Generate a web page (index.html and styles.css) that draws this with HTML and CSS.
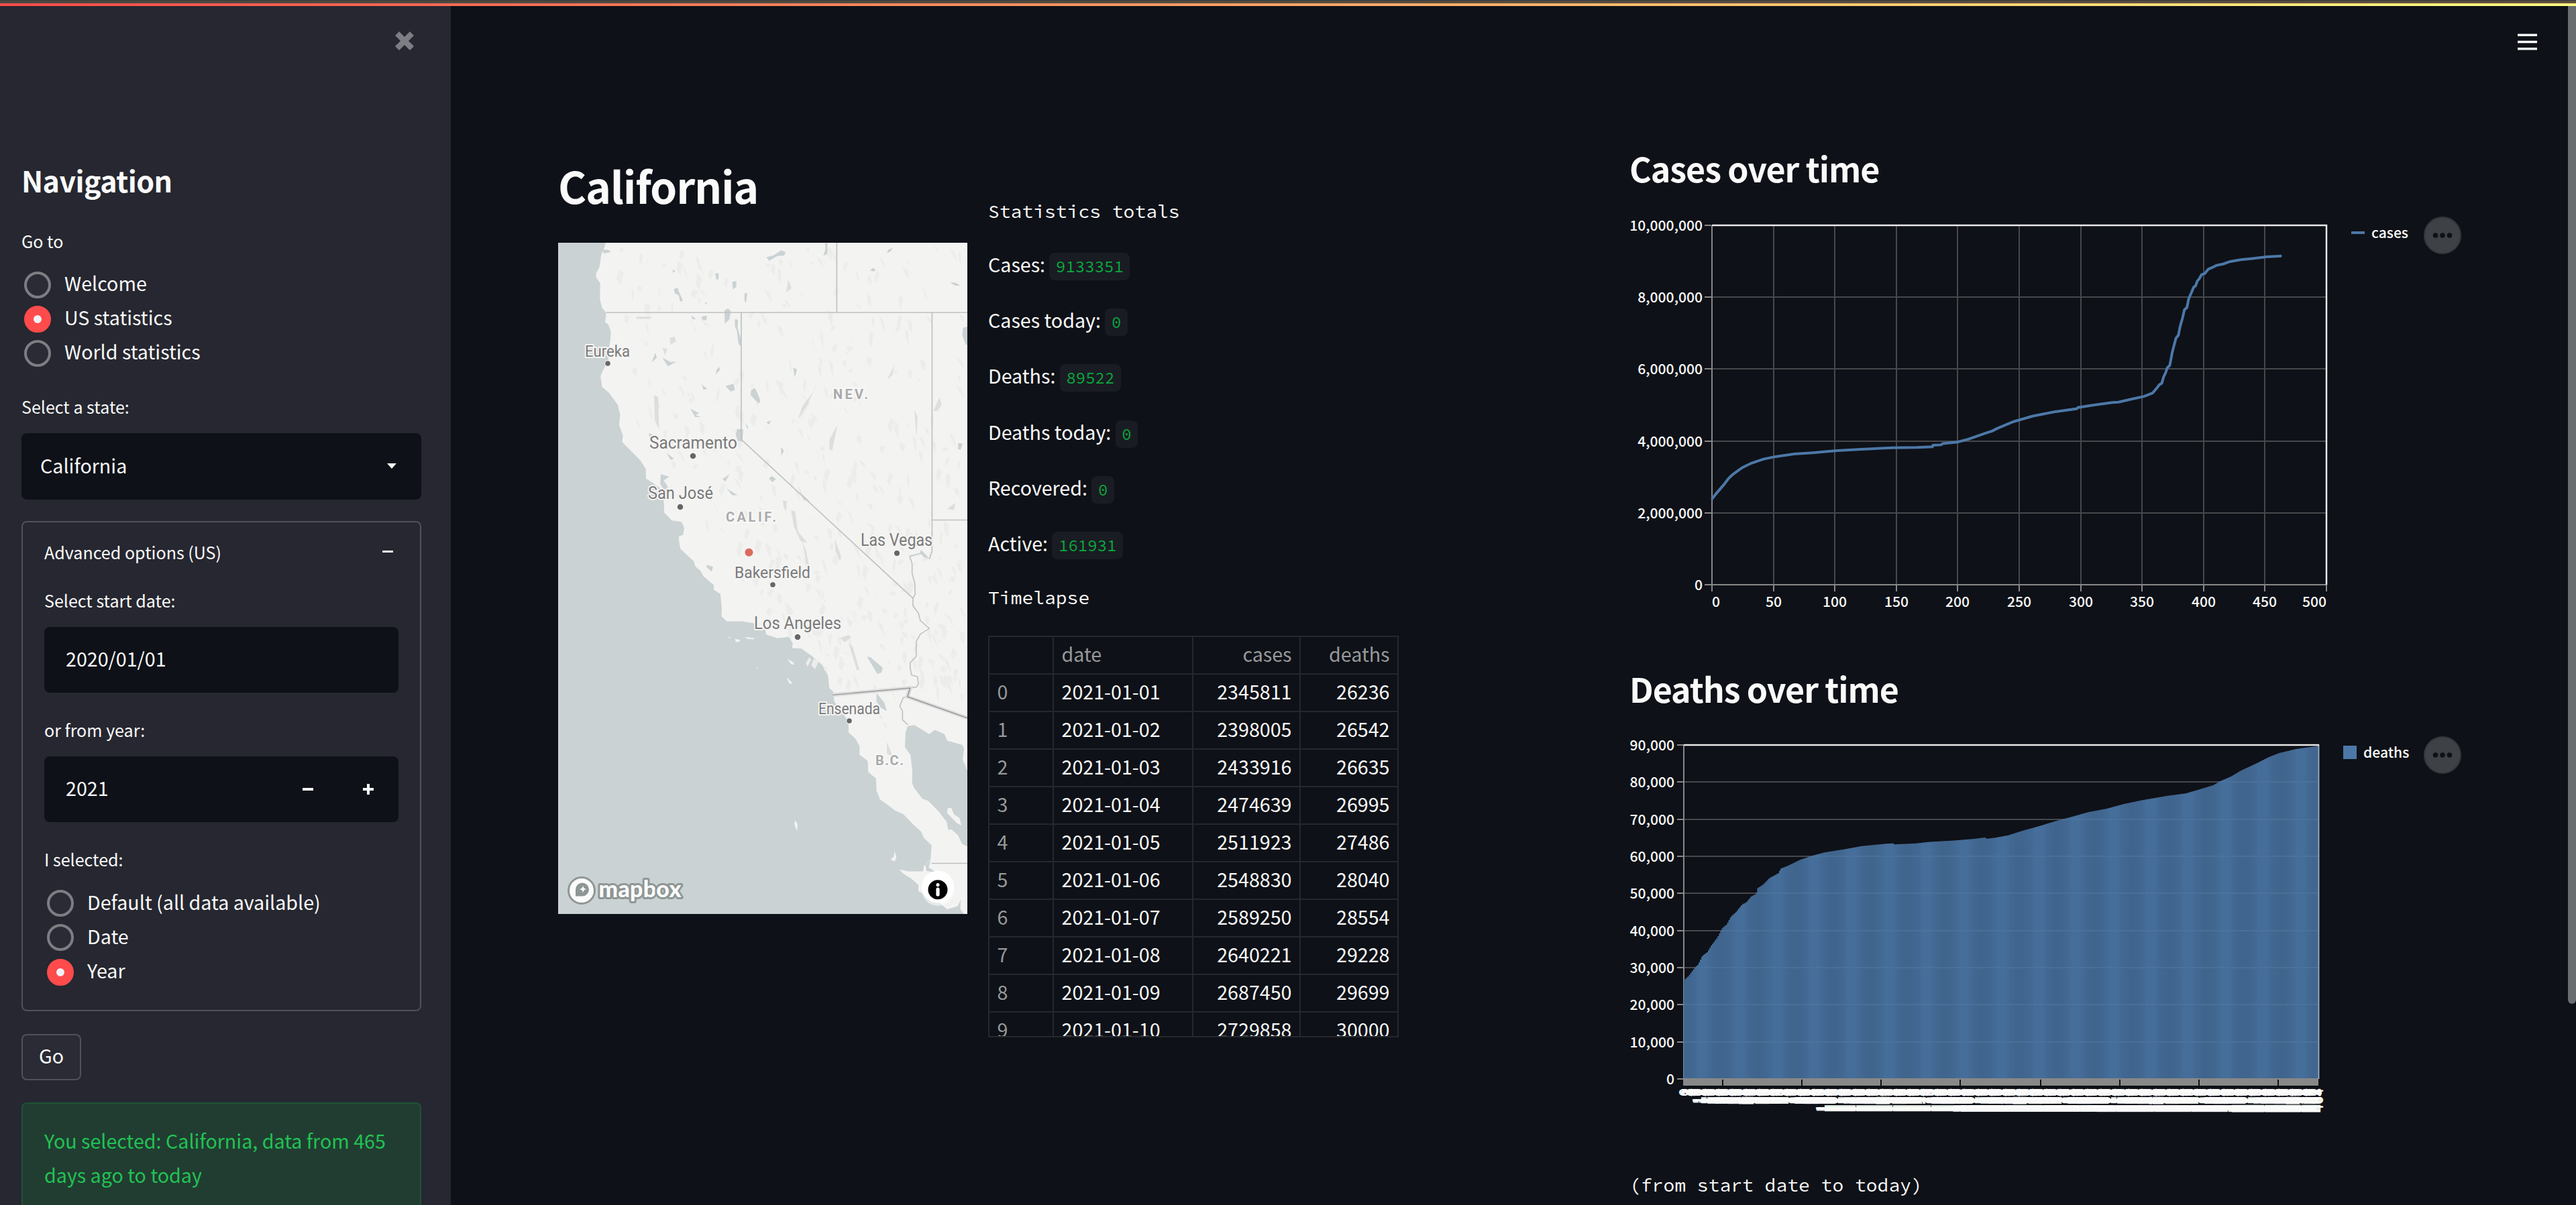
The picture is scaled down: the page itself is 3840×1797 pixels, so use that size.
FILE: index.html
```html
<!DOCTYPE html>
<html lang="en">
<head>
<meta charset="utf-8">
<title>California</title>
<link rel="stylesheet" href="styles.css">
</head>
<body>
<div class="decoration"></div>
<div class="app">
  <aside class="sidebar">
    <svg class="close" viewBox="0 0 28 28"><path d="M6 0 14 8 22 0 28 6 20 14 28 22 22 28 14 20 6 28 0 22 8 14 0 6Z"/></svg>
    <h2 class="nav-title">Navigation</h2>
    <div class="label">Go to</div>
    <div class="radios">
      <div class="radio"><i class="dot"></i><span>Welcome</span></div>
      <div class="radio"><i class="dot on"></i><span>US statistics</span></div>
      <div class="radio"><i class="dot"></i><span>World statistics</span></div>
    </div>
    <div class="label state-label">Select a state:</div>
    <div class="input select"><span>California</span><svg class="caret" viewBox="0 0 14 8"><path d="M0 0H14L7 8Z"/></svg></div>
    <section class="expander">
      <div class="label expander-head"><span>Advanced options (US)</span><i class="minus thin"></i></div>
      <div class="label date-label">Select start date:</div>
      <div class="input"><span>2020/01/01</span></div>
      <div class="label next-label">or from year:</div>
      <div class="input"><span>2021</span><div class="steps"><i class="minus"></i><i class="minus plus"></i></div></div>
      <div class="label next-label">I selected:</div>
      <div class="radios">
        <div class="radio"><i class="dot"></i><span>Default (all data available)</span></div>
        <div class="radio"><i class="dot"></i><span>Date</span></div>
        <div class="radio"><i class="dot on"></i><span>Year</span></div>
      </div>
    </section>
    <button class="go">Go</button>
    <div class="success">You selected: California, data from 465 days ago to today</div>
  </aside>

  <main class="main">
    <section class="map-col">
      <h1>California</h1>
      <svg class="map" viewBox="832 362 610 1001">
        <rect class="sea" x="832" y="362" width="610" height="1001"/>
        <g transform="translate(820 230) scale(.4082 .3699)">
          <path class="land" d="M203 357 197 380 187 405 180 455 168 480 168 497 183 520 182 585 190 620 205 640 201 678 212 685 222 715 220 750 214 790 212 835 196 865 184 895 190 938 215 962 247 1010 256 1050 252 1090 266 1135 263 1160 290 1190 330 1235 350 1270 350 1308 375 1325 400 1345 415 1395 417 1445 445 1477 480 1482 490 1508 485 1535 470 1541 471 1560 476 1591 500 1616 525 1641 530 1661 550 1681 560 1701 582 1723 598 1736 598 1756 622 1773 627 1831 626 1863 645 1883 700 1883 745 1891 785 1916 790 1936 830 1951 872 1946 886 1971 884 1991 918 1993 960 2026 995 2061 1015 2101 1020 2153 1034 2166 1038 2206 1060 2241 1090 2286 1090 2331 1115 2356 1130 2386 1130 2421 1160 2446 1162 2491 1190 2516 1192 2566 1205 2601 1230 2621 1260 2646 1290 2661 1325 2701 1355 2731 1365 2756 1393 2786 1390 2841 1365 2871 1362 2891 1310 2891 1275 2883 1290 2901 1320 2921 1345 2946 1345 2971 1420 3016 1450 3044 1490 3031 1512 3063H1524V357Z"/>
          <g id="relief" class="relief"></g>
          <g class="relief-dark">
            <path d="M870 505 882 540 862 558 868 520ZM437 740 455 735 460 755 440 768ZM1020 1150 1050 1090 1030 1195 1020 1190ZM880 1435 895 1440 905 1520 940 1568 915 1560 890 1500ZM900 1325 920 1370 950 1400 925 1395ZM1230 910 1258 850 1250 890ZM1400 1035 1422 980 1430 1010 1415 1035ZM915 1541 935 1600 945 1655 935 1650 925 1580ZM1040 1550 1062 1620 1060 1640 1042 1600ZM380 970 395 980 398 1110 382 1070ZM1060 1950 1090 1938 1100 1948 1075 1968ZM1230 2370 1245 2410 1255 2440 1230 2415ZM410 780 428 785 420 812ZM1330 1030 1342 1060 1338 1140ZM1450 1430 1480 1405 1475 1435ZM315 655H368V664H315ZM965 950 975 920 940 1010 905 1070 920 1020ZM850 1395 864 1400 862 1440 852 1420ZM1090 1970 1105 1985 1130 2080 1120 2080ZM1180 2190 1200 2260 1235 2320 1220 2300Z"/>
          </g>
          <path class="sea" d="M790 415 815 408 845 387 860 395 855 408 830 410 800 430ZM452 545 465 537 473 560 485 590 475 595 470 570 455 560ZM665 515 680 510 680 535 668 545ZM603 480 615 480 615 505 607 505ZM710 560 720 560 715 600 710 590ZM637 630 650 622 660 632 655 665 638 683ZM675 665 686 668 685 700 695 740 698 775 688 765 682 710 675 695ZM735 950 748 942 760 970 768 995 762 1004 748 990 732 970ZM640 935 670 925 675 950 660 957ZM553 920 560 935 575 945 560 950ZM515 648 533 665 520 665ZM553 655 573 650 570 670 557 668ZM683 1108H705L703 1158 685 1155 678 1130ZM404 1290 435 1300 415 1315 430 1340 420 1360 402 1330ZM843 1180 854 1195 845 1215ZM799 1308 810 1297 825 1310 812 1322ZM425 1203 452 1228 440 1232ZM645 1348 685 1375 665 1375ZM360 1125 375 1130 365 1148ZM512 1025 545 1045 530 1050 550 1060 530 1060ZM410 820 440 838 462 836 430 855ZM385 800 390 820 370 840ZM630 1310 655 1290 640 1320ZM1524 695 1508 700 1505 730 1518 768 1524 768ZM1168 468 1180 458 1190 470 1180 472ZM1460 517 1480 518 1498 530 1480 530ZM1005 357 1013 360 1012 400 998 410 1005 385ZM1230 400 1235 385 1250 378 1245 390ZM608 870 618 857 620 870 605 888ZM1490 1165H1505V1172L1500 1190H1490ZM888 860 902 868 893 900ZM190 385 212 385 222 395 197 400ZM790 1080 806 1073 800 1090ZM565 595 573 600 568 607ZM447 465 457 470 450 480ZM713 1085 724 1100 720 1107ZM1157 2025 1170 2028 1215 2070 1210 2090 1195 2095ZM1192 2172 1220 2210 1230 2245 1205 2230 1192 2205ZM1310 1618 1350 1608 1355 1595 1385 1630 1365 1625 1355 1612 1312 1625ZM572 1655 595 1663 590 1683 572 1665Z"/>
          <path class="sea" d="M1306 2306 1330 2301 1385 2338 1405 2321 1440 2338 1450 2364 1505 2381 1512 2396 1507 2441 1524 2486V2791L1505 2781 1490 2746 1465 2721 1455 2726 1448 2691 1420 2651 1380 2606 1360 2599 1330 2556 1322 2536 1323 2486 1316 2421 1296 2391 1298 2331ZM1390 2845 1382 2875 1410 2895 1375 2890 1370 2865ZM1485 3040 1500 3005 1498 3045Z"/>
          <path class="land" d="M675 1954 695 1958 690 1967 678 1966ZM712 1946 735 1950 748 1949 742 1956 720 1954ZM866 2036 885 2045 894 2058 880 2056ZM863 2107 885 2132 875 2136ZM752 2069 761 2072 756 2074ZM895 2685 904 2702 902 2728 896 2715 892 2700ZM1258 2810 1265 2835 1258 2851 1243 2843 1255 2832ZM1452 2636 1465 2636 1475 2661 1495 2676 1502 2706 1485 2696 1450 2656ZM649 1947H659V1950H649Z"/>
          <g class="border-line">
            <path d="M205 638H1524M1047 357V638M698 638V1150L1325 1790M1395 640V1600L1385 1632M1395 1475H1524M1393 2859H1524"/>
            <path d="M1325 1790 1333 1775 1332 1730 1322 1690V1650L1314 1625M1325 1790V1820L1345 1850 1352 1880 1385 1912 1352 1935 1337 1965V2025L1315 2050V2070L1320 2100 1342 2107 1345 2135 1338 2148 1315 2152M1305 2187 1290 2190 1277 2225 1287 2245V2280L1306 2300"/>
          </g>
          <path class="halo-line" d="M1032 2180 1315 2152 1305 2187 1524 2273"/>
          <path class="frontier" d="M1032 2180 1315 2152 1305 2187 1524 2273"/>
        </g>
        <g class="town">
          <text x="872" y="532" font-size="23" textLength="67" lengthAdjust="spacingAndGlyphs">Eureka</text><circle cx="906" cy="542" r="3.8"/>
          <text x="968" y="669" font-size="26" textLength="131" lengthAdjust="spacingAndGlyphs">Sacramento</text><circle cx="1033" cy="680" r="4.3"/>
          <text x="966" y="744" font-size="26" textLength="97" lengthAdjust="spacingAndGlyphs">San José</text><circle cx="1014" cy="756" r="4.3"/>
          <text x="1283" y="814" font-size="26" textLength="107" lengthAdjust="spacingAndGlyphs">Las Vegas</text><circle cx="1337" cy="825" r="4"/>
          <text x="1095" y="862" font-size="24" textLength="113" lengthAdjust="spacingAndGlyphs">Bakersfield</text><circle cx="1152" cy="872" r="3.8"/>
          <text x="1124" y="938" font-size="26" textLength="130" lengthAdjust="spacingAndGlyphs">Los Angeles</text><circle cx="1189" cy="950" r="4.3"/>
          <text x="1220" y="1065" font-size="23" textLength="92" lengthAdjust="spacingAndGlyphs">Ensenada</text><circle cx="1266" cy="1075" r="3.8"/>
        </g>
        <g class="region">
          <text x="1242" y="595" textLength="52">NEV.</text>
          <text x="1082" y="778" textLength="75">CALIF.</text>
          <text x="1305" y="1141" textLength="42">B.C.</text>
        </g>
        <circle class="marker" cx="1116.5" cy="823.7" r="6"/>
        <g class="logo">
          <circle cx="867" cy="1328" r="19.5"/>
          <path class="pin" d="M858 1336.5v-9.5a10 10 0 1 1 10 9.5Z"/>
          <path class="star" d="M869 1321l1.500 3.500 3.500 1.500-3.500 1.500-1.500 3.500-1.500-3.500-3.500-1.500 3.500-1.500Z"/>
          <text x="892.5" y="1337.5" textLength="123">mapbox</text>
        </g>
        <g class="info">
          <circle class="glow" cx="1398" cy="1327" r="24"/><circle class="disc" cx="1398" cy="1322.5" r="24"/>
          <circle cx="1398" cy="1326.7" r="14.5"/>
          <path class="disc" d="M1398 1317a2.600 2.600 0 1 1-.01 0ZM1395.400 1326a2.600 2.600 0 0 1 5.200 0v8a2.600 2.600 0 0 1-5.200 0Z"/>
        </g>
      </svg>
    </section>

    <section class="stats-col">
      <p class="mono">Statistics totals</p>
      <p class="stat">Cases: <code>9133351</code></p>
      <p class="stat">Cases today: <code>0</code></p>
      <p class="stat">Deaths: <code>89522</code></p>
      <p class="stat">Deaths today: <code>0</code></p>
      <p class="stat">Recovered: <code>0</code></p>
      <p class="stat">Active: <code>161931</code></p>
      <p class="mono">Timelapse</p>
      <div class="table">
        <div class="row head"><span></span><span>date</span><span>cases</span><span>deaths</span></div>
        <div class="row"><span>0</span><span>2021-01-01</span><span>2345811</span><span>26236</span></div>
        <div class="row"><span>1</span><span>2021-01-02</span><span>2398005</span><span>26542</span></div>
        <div class="row"><span>2</span><span>2021-01-03</span><span>2433916</span><span>26635</span></div>
        <div class="row"><span>3</span><span>2021-01-04</span><span>2474639</span><span>26995</span></div>
        <div class="row"><span>4</span><span>2021-01-05</span><span>2511923</span><span>27486</span></div>
        <div class="row"><span>5</span><span>2021-01-06</span><span>2548830</span><span>28040</span></div>
        <div class="row"><span>6</span><span>2021-01-07</span><span>2589250</span><span>28554</span></div>
        <div class="row"><span>7</span><span>2021-01-08</span><span>2640221</span><span>29228</span></div>
        <div class="row"><span>8</span><span>2021-01-09</span><span>2687450</span><span>29699</span></div>
        <div class="row"><span>9</span><span>2021-01-10</span><span>2729858</span><span>30000</span></div>
      </div>
    </section>

    <section class="chart-col">
      <h2>Cases over time</h2>
      <svg class="chart cases" viewBox="2430 283 1320 710">
        <g id="cases-axes"></g>
        <path id="cases-line" class="series" d=""/>
        <path class="legend-line" d="M3505 347H3525"/>
        <text x="3535" y="354.5">cases</text>
        <g class="menu"><circle cx="3641" cy="351" r="27"/><path d="M3630.500 351h.01M3641 351h.01M3651.500 351h.01"/></g>
      </svg>
      <h2>Deaths over time</h2>
      <svg class="chart deaths" viewBox="2430 1059 1320 686">
        <g id="deaths-axes"></g>
        <g id="deaths-bars" class="bars"></g>
        <g id="deaths-ticks"></g>
        <rect class="swatch" x="3493" y="1112" width="20" height="20"/>
        <text x="3523" y="1130">deaths</text>
        <g class="menu"><circle cx="3641" cy="1126" r="27"/><path d="M3630.500 1126h.01M3641 1126h.01M3651.500 1126h.01"/></g>
      </svg>
      <p class="mono">(from start date to today)</p>
    </section>
  </main>
</div>
<svg class="hamburger" viewBox="0 0 29 25"><path d="M0 2.200H29M0 12.500H29M0 22.800H29"/></svg>
<div class="scrollbar"></div>
<script src="charts.js"></script>
</body>
</html>
```
FILE: styles.css
```css
* { box-sizing: border-box; margin: 0; padding: 0; }
body {
  background: #0e1117; color: #fafafa; height: 1797px; overflow: hidden;
  font: 28.65px/51.2px "Noto Sans CJK SC", sans-serif;
}
.decoration {
  position: absolute; z-index: 3; left: 0; top: 0; width: 100%; height: 9px;
  background:
    linear-gradient(#42413c, #42413c) 0 0 / 100% 2px no-repeat,
    linear-gradient(90deg, #4c4943, #66513f) 0 2px / 100% 3px no-repeat,
    linear-gradient(90deg, #ff4b4b, #fffd80);
}
.app { display: flex; height: 1797px; }

.sidebar { width: 672px; background: #262730; padding: 47px 44px 0 32px; overflow: hidden; }
.close { display: block; width: 28px; height: 28px; margin: 0 11px 0 auto; fill: #7d7d83; }
.nav-title { font-size: 43px; line-height: 58px; margin-top: 164px; letter-spacing: -.6px; }
.label { font-size: 25.07px; line-height: 40px; }
.sidebar > .label { margin-top: 42px; }
.radios { margin-top: 20px; }
.radio { display: flex; align-items: center; height: 51.2px; padding-left: 4px; }
.radio span { padding: 0 0 6px 20px; }
.dot { width: 40px; height: 40px; border-radius: 50%; border: 4px solid #7d7d83; background: #2a2b34; }
.dot.on { border: 14px solid #ff4b4b; background: #f0f2f6; }
.sidebar > .state-label { margin-top: 33px; }
.input {
  display: flex; align-items: center; justify-content: space-between;
  height: 98px; margin-top: 20px; padding: 0 37px 0 32px; border-radius: 8px; background: #0e1117;
}
.input span { padding-bottom: 3px; }
.input.select { height: 99px; padding-left: 28px; }
.caret { width: 14px; height: 8px; fill: #fafafa; }
.expander { margin-top: 32px; height: 731px; border: 2px solid #515159; border-radius: 8px; padding: 24px 32px; }
.expander-head { display: flex; justify-content: space-between; align-items: center; padding-right: 8px; }
.minus { display: block; width: 16px; height: 4px; background: #fafafa; }
.minus.thin { height: 3px; }
.date-label { margin-top: 32px; }
.next-label { margin-top: 35px; }
.expander .radios { margin-top: 21px; }
.steps { display: flex; gap: 74px; }
.plus {
  height: 16px; margin: -6px 0;
  background:
    linear-gradient(#fafafa, #fafafa) center / 4px 16px no-repeat,
    linear-gradient(#fafafa, #fafafa) center / 16px 4px no-repeat;
}
.go {
  display: block; width: 89px; height: 69px; margin-top: 34px; padding-bottom: 5px;
  border: 2px solid #515159; border-radius: 8px; background: #2a2b34; color: #fafafa; font: inherit;
}
.success {
  margin-top: 33px; height: 180px; padding: 29px 32px; border: 2px solid #1d5434; border-radius: 8px;
  background: #213d31; color: #21c354; line-height: 51.6px;
}

.main { flex: 1; display: grid; grid-template-columns: 610px 612px 1320px; column-gap: 31px; padding-left: 160px; }
.main .chart-col { margin-left: 313px; width: 1320px; }
h1 { margin-top: 234px; font-size: 64.4px; line-height: 84px; letter-spacing: -1.25px; }
.map { display: block; width: 610px; height: 1001px; margin-top: 44px; }
.sea { fill: #cad2d3; }
.land { fill: #f3f3f2; }
.relief { fill: #ececeb; }
.relief-dark { fill: #dededd; }
.border-line path { fill: none; stroke: #c0c0c0; stroke-width: 4; }
.halo-line { fill: none; stroke: #dedede; stroke-width: 15; }
.frontier { fill: none; stroke: #999; stroke-width: 4; }
.town { font-family: Roboto, sans-serif; }
.town text { fill: #7a7a7a; stroke: #f5f5f4; stroke-width: 4px; paint-order: stroke; stroke-linejoin: round; }
.town circle { fill: #666; stroke: #fafafa; stroke-width: 2px; paint-order: stroke; }
.region text { font: 700 20px Roboto, sans-serif; fill: #aaa; stroke: #f8f8f8; stroke-width: 4px; paint-order: stroke; }
.marker { fill: #da6b5b; }
.logo circle { fill: #fbfbfb; stroke: #8e9695; stroke-width: 3px; }
.logo .pin { fill: #8e9695; }
.logo .star { fill: #fbfbfb; }
.logo text { font: 900 34px Lato, sans-serif; fill: #fbfbfb; stroke: #8e9695; stroke-width: 6px; paint-order: stroke; stroke-linejoin: round; }
.info .glow { fill: #fff; opacity: .5; }
.info .disc { fill: #fff; }

.mono { font: 28px/45px "Source Code Pro", "Noto Sans Mono CJK SC", monospace; }
.stats-col { padding-top: 292.5px; }
.stat { height: 51.2px; margin-bottom: 32.2px; }
.stats-col .mono:first-child { margin-bottom: 30px; }
.stats-col .stat + .mono { margin-top: 33px; }
.stat code {
  display: inline-block; padding: 0 9.6px; border-radius: 8px; background: #1a1c24; color: #09ab3b;
  font: 24px/41px "Source Code Pro", "Noto Sans Mono CJK SC", monospace;
}
.table { margin-top: 34px; height: 599px; overflow: hidden; border: 2px solid #26282d; }
.row { display: grid; grid-template-columns: 96px 208px 160px 144px; height: 56px; }
.row span { border: 0 solid #26282d; border-width: 0 2px 2px 0; padding: 0 11.5px 4px; line-height: 50px; text-align: right; }
.row span:last-child { border-right: 0; }
.row span:nth-child(-n+2) { text-align: left; }
.row span:first-child, .row.head span { color: #98999b; }

h2 { font-size: 50.1px; line-height: 66px; letter-spacing: -1.05px; }
.chart-col { padding-top: 217px; }
.chart { display: block; width: 1320px; margin-left: 1px; font: 500 21.1px "Noto Sans CJK SC", sans-serif; fill: #fafafa; }
.cases { height: 710px; }
.deaths { height: 686px; }
.end { text-anchor: end; }
.mid { text-anchor: middle; }
.grid { stroke: #47484c; stroke-width: 2px; }
.tick { stroke: #888; stroke-width: 2px; }
.frame { fill: none; stroke: #e8e8e8; stroke-width: 2.5px; }
.series { fill: none; stroke: #4c78a8; stroke-width: 4px; }
.legend-line { stroke: #4c78a8; stroke-width: 4px; }
.bars, .swatch { fill: #4c78a8; }
.menu circle { fill: #3e4145; stroke: #33363b; stroke-width: 2px; }
.menu path { stroke: #0e1117; stroke-width: 7.5px; stroke-linecap: round; }

.hamburger { position: absolute; left: 3753px; top: 50px; width: 29px; height: 25px; }
.hamburger path { stroke: #fafafa; stroke-width: 3.6px; }
.scrollbar { position: absolute; right: 0; top: 9px; width: 12px; height: 1488px; background: #6b6c70; border-radius: 0 0 6px 6px; }
```
FILE: charts.js
```js
const byId = id => document.getElementById(id);
const line = (cls, x1, y1, x2, y2) => `<line class="${cls}" x1="${x1}" y1="${y1}" x2="${x2}" y2="${y2}"/>`;
const text = (cls, x, y, s) => `<text class="${cls}" x="${x}" y="${y}">${s}</text>`;

// Cases: line chart
const casesPts = [[155,1155],[163,1135],[175,1108],[183,1088],[190,1075],[205,1054],[220,1040],[240,1027],[260,1019],[290,1011],[320,1007],[360,1000],[400,996],[450,991],[490,990],[516,988],[517,983],[530,982],[533,978],[557,973],[575,964],[600,947],[614,938],[622,930],[648,909],[680,891],[715,878],[752,868],[754,864],[780,856],[810,848],[820,847],[840,838],[862,829],[876,818],[883,802],[887,792],[891,787],[894,767],[897,755],[900,738],[904,731],[908,690],[914,645],[918,636],[921,607],[925,580],[928,555],[932,548],[935,520],[940,498],[943,484],[946,480],[949,464],[952,458],[956,444],[961,441],[967,427],[974,421],[980,415],[992,410],[1002,403],[1020,397],[1040,393],[1062,388],[1087,385]];
byId('cases-line').setAttribute('d', 'M' + casesPts.map(([x, y]) => (2410 + x * .912).toFixed(1) + ' ' + (200 + y * .4719).toFixed(1)).join('L'));

let s = '';
for (let i = 0; i <= 5; i++) {
  const y = Math.round(872 - i * 107.2);
  s += line('grid', 2552, y, 3468, y) + line('tick', 2541, y, 2551, y);
  s += text('end', 2538, y + 7.5, (i * 2000000).toLocaleString('en-US'));
}
for (let i = 0; i <= 10; i++) {
  const x = Math.round(2552 + i * 91.6);
  s += line('grid', x, 336, x, 872) + line('tick', x, 872, x, 882);
  s += text(i === 10 ? 'end' : i ? 'mid' : '', x, 905, i * 50);
}
s += line('tick', 2552, 336, 2552, 872) + line('tick', 2552, 872, 3468, 872);
s += '<path class="frame" d="M2552 336H3468V872"/>';
byId('cases-axes').innerHTML = s;

// Deaths: bar chart, one bar per day
const deathPts = [[110,925],[118,912],[128,888],[133,880],[140,855],[148,845],[155,825],[165,802],[173,775],[180,765],[187,742],[195,730],[205,708],[212,702],[220,685],[228,678],[230,662],[240,650],[250,632],[266,617],[267,606],[280,597],[300,580],[320,568],[340,559],[375,549],[400,541],[440,534],[452,533],[453,536],[490,533],[510,529],[550,525],[585,520],[603,516],[604,520],[618,517],[640,510],[665,496],[690,484],[720,468],[750,454],[770,444],[800,434],[830,420],[860,409],[900,397],[930,390],[950,380],[976,366],[985,356],[1005,341],[1020,325],[1047,303],[1065,287],[1082,275],[1110,263],[1148,254]]
  .map(([x, y]) => [2410 + x * .912, 980 + y * .521]);
const days = 465, left = 2509.5, step = 947 / days;
const topAt = x => {
  let k = 1;
  while (k < deathPts.length - 1 && deathPts[k][0] < x) k++;
  const [a, b] = deathPts[k - 1], [c, d] = deathPts[k];
  return b + (d - b) * Math.max(0, Math.min(1, (x - a) / (c - a)));
};
s = '';
for (let i = 0; i <= 9; i++) {
  const y = Math.round(1609 - i * 55.33);
  s += line('grid', 2510, y, 3456, y) + line('tick', 2500, y, 2510, y);
  s += text('end', 2496, y + 8, (i * 10000).toLocaleString('en-US'));
}
s += line('tick', 2510, 1111, 2510, 1609) + '<path class="frame" d="M2510 1111H3456V1609"/>';
byId('deaths-axes').innerHTML = s;

let bars = '', ticks = '<rect x="2509" y="1608" width="947" height="11" fill="#888"/>';
for (let i = 0; i < days; i++) {
  const x = left + i * step, y = topAt(x + step / 2);
  bars += `<rect x="${(x + step * .05).toFixed(2)}" y="${y.toFixed(1)}" width="${(step * .9).toFixed(2)}" height="${(1608 - y).toFixed(1)}"/>`;
  ticks += `<text class="end" transform="translate(${(x + step / 2 + 7.5).toFixed(2)} 1623) rotate(-90)">${i}</text>`;
}
for (const x of [2567, 2685, 2803, 2921, 3041, 3159, 3277, 3395]) ticks += `<rect x="${x}" y="1610" width="2" height="9" fill="#0e1117"/>`;
byId('deaths-bars').innerHTML = bars;
byId('deaths-ticks').innerHTML = ticks;

// Faint hill shading over the land, from a seeded generator
let seed = 7;
const rnd = () => (seed = (seed * 16807) % 2147483647) / 2147483647;
let d = '';
for (let i = 0; i < 420; i++) {
  const y = 370 + rnd() * 1800;
  const coast = y < 1000 ? 250 : y < 1900 ? 250 + (y - 1000) * .66 : 850 + (y - 1900) * .75;
  const x = coast + rnd() * (1500 - coast);
  const w = 6 + rnd() * 14, h = 12 + rnd() * 42, k = (rnd() - .5) * 30;
  d += `M${x.toFixed()} ${y.toFixed()}l${w.toFixed()} ${(h * .3).toFixed()} ${(k).toFixed()} ${h.toFixed()} ${(-w * .8).toFixed()} ${(-h * .5).toFixed()}Z`;
}
byId('relief').innerHTML = `<path d="${d}"/>`;
```
